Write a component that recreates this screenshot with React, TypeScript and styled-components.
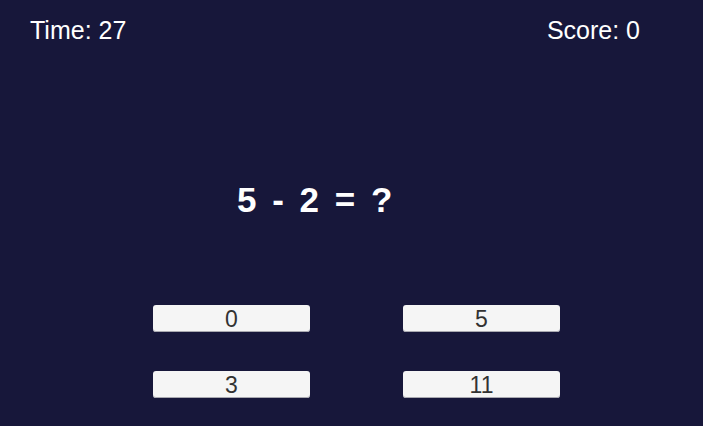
import React from "react";
import styled, { createGlobalStyle } from "styled-components";

const Global = createGlobalStyle`
  html, body { margin: 0; padding: 0; height: 100%; }
  body { background: #17173a; font-family: "Liberation Sans", Arial, sans-serif; }
  #root { height: 100%; }
`;

const Screen = styled.div`
  width: 703px;
  height: 426px;
  background: #17173a;
  display: flex;
  flex-direction: column;
  overflow: hidden;
`;

const Header = styled.div`
  display: flex;
  justify-content: space-between;
  padding: 16px 63px 0 30px;
  color: #ffffff;
  font-size: 25px;
  line-height: 29px;
`;

const Question = styled.div`
  margin-top: 135px;
  padding-left: 237px;
  color: #ffffff;
  font-size: 35px;
  font-weight: bold;
  line-height: 40px;
  letter-spacing: 3px;
`;

const Answers = styled.div`
  margin-top: 85px;
  padding-left: 153px;
  display: grid;
  grid-template-columns: 157px 157px;
  column-gap: 93px;
  row-gap: 39px;
`;

const AnswerButton = styled.button`
  height: 27px;
  padding: 1px 0 0;
  border: none;
  border-radius: 3px;
  background: #f5f5f5;
  box-shadow: inset 0 -1px 0 #a9a9b0;
  color: #323232;
  font-family: "Liberation Sans", Arial, sans-serif;
  font-size: 23px;
  line-height: 26px;
  text-align: center;
  cursor: pointer;
`;

const answers = [0, 5, 3, 11];

export default function App() {
  return (
    <>
      <Global />
      <Screen>
        <Header>
          <span>Time: 27</span>
          <span>Score: 0</span>
        </Header>
        <Question>5 - 2 = ?</Question>
        <Answers>
          {answers.map((a) => (
            <AnswerButton key={a}>{a}</AnswerButton>
          ))}
        </Answers>
      </Screen>
    </>
  );
}
